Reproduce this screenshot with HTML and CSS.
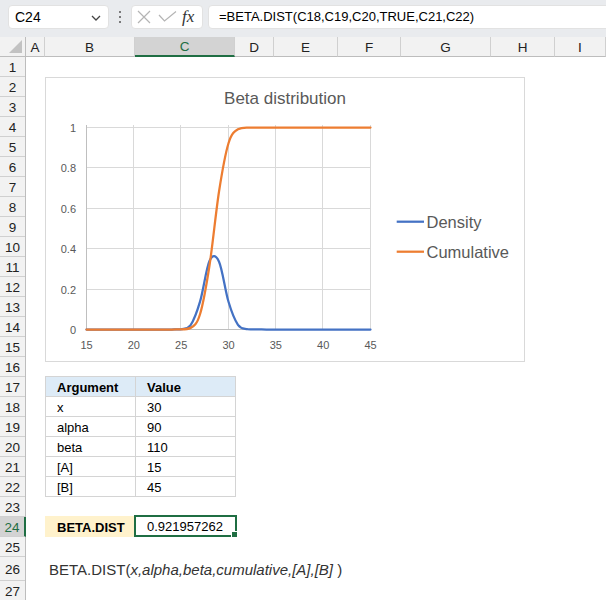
FILE: index.html
```html
<!DOCTYPE html>
<html lang="en">
<head>
<meta charset="utf-8">
<title>BETA.DIST</title>
<link rel="stylesheet" href="styles.css">
</head>
<body>
<div class="app">
  <div class="toolbar">
    <div class="namebox">
      <span class="ref">C24</span>
      <svg class="chev" width="10" height="6" viewBox="0 0 10 6"><path d="M1 1 L5 5 L9 1" fill="none" stroke="#444" stroke-width="1.3"/></svg>
    </div>
    <div class="dots"><span></span><span></span><span></span></div>
    <div class="fxbox">
      <svg class="ico-x" width="14" height="14" viewBox="0 0 14 14"><path d="M1 1 L13 13 M13 1 L1 13" stroke="#b4b4b4" stroke-width="1.2" fill="none"/></svg>
      <svg class="ico-ok" width="19" height="13" viewBox="0 0 19 13"><path d="M1 4 L6.5 10 L18 0.5" stroke="#b4b4b4" stroke-width="1.2" fill="none"/></svg>
      <span class="fx">fx</span>
    </div>
    <div class="formula">=BETA.DIST(C18,C19,C20,TRUE,C21,C22)</div>
  </div>

  <div class="colheads">
    <div class="corner"><span class="tri"></span></div>
    <div class="ch c-a">A</div>
    <div class="ch c-b">B</div>
    <div class="ch c-c sel">C</div>
    <div class="ch c-d">D</div>
    <div class="ch c-e">E</div>
    <div class="ch c-f">F</div>
    <div class="ch c-g">G</div>
    <div class="ch c-h">H</div>
    <div class="ch c-i">I</div>
  </div>

  <div class="body">
    <div class="rowheads">
      <div class="rh">1</div><div class="rh">2</div><div class="rh">3</div><div class="rh">4</div>
      <div class="rh">5</div><div class="rh">6</div><div class="rh">7</div><div class="rh">8</div>
      <div class="rh">9</div><div class="rh">10</div><div class="rh">11</div><div class="rh">12</div>
      <div class="rh">13</div><div class="rh">14</div><div class="rh">15</div><div class="rh">16</div>
      <div class="rh">17</div><div class="rh">18</div><div class="rh">19</div><div class="rh">20</div>
      <div class="rh">21</div><div class="rh">22</div><div class="rh">23</div><div class="rh sel">24</div>
      <div class="rh">25</div><div class="rh tall">26</div><div class="rh">27</div>
    </div>

    <div class="cells">
      <div class="tc colb r17 hdr">Argument</div>
      <div class="tc colc r17 hdr">Value</div>
      <div class="tc colb r18">x</div>
      <div class="tc colc r18">30</div>
      <div class="tc colb r19">alpha</div>
      <div class="tc colc r19">90</div>
      <div class="tc colb r20">beta</div>
      <div class="tc colc r20">110</div>
      <div class="tc colb r21">[A]</div>
      <div class="tc colc r21">15</div>
      <div class="tc colb r22 last">[B]</div>
      <div class="tc colc r22 last">45</div>

      <div class="tc colb r24 fn">BETA.DIST</div>
      <div class="active r24">0.921957262</div>

      <div class="syntax">BETA.DIST(<i>x,alpha,beta,cumulative,[A],[B]</i> )</div>

      <div class="chart">
        <svg width="480" height="285" viewBox="0 0 480 285">
          <rect x="0.5" y="0.5" width="479" height="284" fill="#fff" stroke="#d9d9d9"/>
          <text class="title" x="240" y="27" text-anchor="middle">Beta distribution</text>
          <g stroke="#d9d9d9" stroke-width="1">
            <path d="M41.5 50.5 H325.5 M41.5 90.5 H325.5 M41.5 131.5 H325.5 M41.5 171.5 H325.5 M41.5 212.5 H325.5"/>
            <path d="M88.5 48 V252.5 M135.5 48 V252.5 M183.5 48 V252.5 M230.5 48 V252.5 M277.5 48 V252.5 M325.5 48 V252.5"/>
            <path d="M41.5 48 V252.5 M41.5 252.5 H325.5" stroke="#bfbfbf"/>
          </g>
          <g class="ylab" text-anchor="end">
            <text x="31" y="54.5">1</text>
            <text x="31" y="94.5">0.8</text>
            <text x="31" y="135.5">0.6</text>
            <text x="31" y="175.5">0.4</text>
            <text x="31" y="216.5">0.2</text>
            <text x="31" y="256.5">0</text>
          </g>
          <g class="xlab" text-anchor="middle">
            <text x="41.5" y="272">15</text>
            <text x="88.8" y="272">20</text>
            <text x="136.2" y="272">25</text>
            <text x="183.5" y="272">30</text>
            <text x="230.8" y="272">35</text>
            <text x="278.2" y="272">40</text>
            <text x="325.5" y="272">45</text>
          </g>
          <path id="density" d="" fill="none" stroke="#4472c4" stroke-width="2.25" stroke-linejoin="round" stroke-linecap="round"/>
          <path id="cumulative" d="" fill="none" stroke="#ed7d31" stroke-width="2.25" stroke-linejoin="round" stroke-linecap="round"/>
          <path d="M351.7 144.7 H379" stroke="#4472c4" stroke-width="2.25"/>
          <path d="M351.7 174.7 H379" stroke="#ed7d31" stroke-width="2.25"/>
          <text class="leg" x="381.5" y="150.5">Density</text>
          <text class="leg" x="381.5" y="180.5">Cumulative</text>
        </svg>
      </div>
    </div>
  </div>
</div>
<script src="script.js"></script>
</body>
</html>
```

FILE: styles.css
```css
* { box-sizing: border-box; }
html, body { margin: 0; padding: 0; background: #fff; }
body {
  font-family: "Liberation Sans", Arial, sans-serif;
  color: #000;
  width: 606px;
  height: 600px;
  overflow: hidden;
}
.app { width: 606px; overflow: hidden; }

/* toolbar */
.toolbar {
  height: 37px;
  background: #e9ebee;
  display: flex;
  align-items: flex-start;
  padding: 5px 0 0 8px;
}
.namebox {
  width: 101px;
  height: 24px;
  background: #fff;
  border: 1px solid #e2e2e2;
  border-radius: 4px;
  display: flex;
  align-items: center;
  justify-content: space-between;
  padding: 0 7px 0 6px;
  font-size: 14px;
}
.chev { margin-top: 1px; }
.dots {
  width: 22px;
  height: 24px;
  display: flex;
  flex-direction: column;
  align-items: center;
  justify-content: center;
  gap: 2.5px;
}
.dots span { width: 2.5px; height: 2.5px; background: #555; border-radius: 50%; }
.fxbox {
  width: 72px;
  height: 24px;
  background: #fff;
  border: 1px solid #e2e2e2;
  border-radius: 4px;
  display: flex;
  align-items: center;
  padding-left: 5px;
}
.ico-x { margin-right: 7px; }
.ico-ok { margin-right: 5px; }
.fx {
  font-family: "Liberation Serif", serif;
  font-style: italic;
  font-size: 17px;
  color: #333;
  margin-top: -1px;
}
.formula {
  flex: 1;
  height: 24px;
  margin-left: 5px;
  margin-right: -8px;
  background: #fff;
  border: 1px solid #e2e2e2;
  border-radius: 4px;
  font-size: 13px;
  line-height: 22px;
  padding-left: 10px;
  color: #000;
}

/* column headers */
.colheads {
  display: flex;
  height: 20px;
  background: #f2f2f2;
  font-size: 13.5px;
  color: #222;
}
.corner {
  width: 26px;
  border-right: 1px solid #bdbdbd;
  border-bottom: 1px solid #bdbdbd;
  position: relative;
}
.tri {
  position: absolute;
  right: 3px;
  bottom: 3px;
  width: 0;
  height: 0;
  border-left: 13px solid transparent;
  border-bottom: 13px solid #c2c2c2;
}
.ch {
  border-right: 1px solid #d0d0d0;
  border-bottom: 1px solid #bdbdbd;
  display: flex;
  align-items: center;
  justify-content: center;
  padding-top: 1px;
}
.ch.sel {
  background: #d3d3d3;
  color: #1f6e43;
  border-bottom: 2px solid #1f6e43;
}
.c-a { width: 19px; }
.c-b { width: 90px; }
.c-c { width: 100px; }
.c-d { width: 39px; }
.c-e { width: 64px; }
.c-f { width: 63px; }
.c-g { width: 90px; }
.c-h { width: 64px; }
.c-i { flex: 1; }

/* body */
.body { display: flex; }
.rowheads {
  width: 26px;
  background: #f2f2f2;
  border-right: 1px solid #bdbdbd;
  font-size: 13.5px;
  color: #222;
}
.rh {
  height: 20px;
  border-bottom: 1px solid #d0d0d0;
  display: flex;
  align-items: center;
  justify-content: center;
  padding-top: 1px;
}
.rh.tall { height: 24px; }
.rh.sel {
  background: #d3d3d3;
  color: #1f6e43;
  margin-right: -1px;
  border-right: 2px solid #1f6e43;
}

.cells {
  flex: 1;
  position: relative;
  display: grid;
  grid-template-columns: 19px 90px 100px 39px 64px 63px 90px 64px 1fr;
  grid-template-rows: repeat(25, 20px) 24px 20px;
  font-size: 13px;
}
.colb { grid-column: 2; }
.colc { grid-column: 3; }
.r17 { grid-row: 17; }
.r18 { grid-row: 18; }
.r19 { grid-row: 19; }
.r20 { grid-row: 20; }
.r21 { grid-row: 21; }
.r22 { grid-row: 22; }
.r24 { grid-row: 24; }

.tc {
  border-left: 1px solid #d4d4d4;
  border-top: 1px solid #d4d4d4;
  margin-top: -1px;
  display: flex;
  align-items: center;
  padding-left: 11px;
  padding-top: 1px;
}
.tc.colc { border-right: 1px solid #d4d4d4; margin-right: -1px; }
.tc.last { border-bottom: 1px solid #d4d4d4; }
.tc.hdr { background: #ddebf7; font-weight: bold; }
.tc.fn {
  background: #fff2cc;
  font-weight: bold;
  border: none;
  margin-top: -1px;
  padding-left: 12px;
}

.active {
  grid-column: 3;
  border: 2px solid #1f6e43;
  margin: -2px -2px 0 -1px;
  display: flex;
  align-items: center;
  padding-left: 11px;
  padding-top: 1px;
  position: relative;
}
.active::after {
  content: "";
  position: absolute;
  right: -3px;
  bottom: -3px;
  width: 5px;
  height: 5px;
  background: #1f6e43;
  border: 1px solid #fff;
}

.syntax {
  grid-column: 2 / 8;
  grid-row: 26;
  font-size: 15px;
  color: #333;
  display: flex;
  align-items: center;
  padding-left: 4px;
  white-space: pre;
}
.syntax i { font-style: italic; }

.chart {
  position: absolute;
  left: 19px;
  top: 20px;
  width: 480px;
  height: 285px;
}
.chart svg { display: block; }
.title { font-family: "Liberation Sans", Arial, sans-serif; font-size: 17px; fill: #595959; }
.ylab text, .xlab text { font-family: "Liberation Sans", Arial, sans-serif; font-size: 11px; fill: #595959; }
.leg { font-family: "Liberation Sans", Arial, sans-serif; font-size: 16.5px; fill: #595959; }
```

FILE: script.js
```js
(function () {
  function lgamma(z) {
    var c = [0.99999999999980993, 676.5203681218851, -1259.1392167224028,
      771.32342877765313, -176.61502916214059, 12.507343278686905,
      -0.13857109526572012, 9.9843695780195716e-6, 1.5056327351493116e-7];
    z -= 1;
    var x = c[0];
    for (var i = 1; i < 9; i++) x += c[i] / (z + i);
    var t = z + 7.5;
    return 0.5 * Math.log(2 * Math.PI) + (z + 0.5) * Math.log(t) - t + Math.log(x);
  }
  var a = 90, b = 110, A = 15, B = 45, W = B - A;
  var lnB = lgamma(a) + lgamma(b) - lgamma(a + b);
  function pdf(x) {
    var u = (x - A) / W;
    if (u <= 0 || u >= 1) return 0;
    return Math.exp((a - 1) * Math.log(u) + (b - 1) * Math.log(1 - u) - lnB) / W;
  }
  function cdf(x) {
    if (x <= A) return 0;
    var n = 4000, h = (x - A) / n, s = pdf(A) + pdf(x);
    for (var i = 1; i < n; i++) s += (i % 2 ? 4 : 2) * pdf(A + i * h);
    return Math.min(1, s * h / 3);
  }
  var BASE = 252.5;
  function px(x) { return 41.5 + (x - 15) * 284 / 30; }
  function py(v) { return BASE - v * 202; }
  function f(n) { return n.toFixed(2); }

  /* Catmull-Rom style smoothing (Excel "smoothed line"), kept above the axis */
  function smooth(pts) {
    var d = "M" + f(pts[0][0]) + " " + f(pts[0][1]);
    for (var i = 0; i < pts.length - 1; i++) {
      var p0 = pts[i - 1] || pts[i], p1 = pts[i], p2 = pts[i + 1], p3 = pts[i + 2] || p2;
      var c1y = Math.min(BASE, p1[1] + (p2[1] - p0[1]) / 6);
      var c2y = Math.min(BASE, p2[1] - (p3[1] - p1[1]) / 6);
      d += " C" + f(p1[0] + (p2[0] - p0[0]) / 6) + " " + f(c1y) + " " +
        f(p2[0] - (p3[0] - p1[0]) / 6) + " " + f(c2y) + " " +
        f(p2[0]) + " " + f(p2[1]);
    }
    return d;
  }

  /* monotone cubic (no overshoot) */
  function monotone(pts) {
    var n = pts.length, dx = [], dy = [], m = [], t = [];
    for (var i = 0; i < n - 1; i++) {
      dx[i] = pts[i + 1][0] - pts[i][0];
      dy[i] = pts[i + 1][1] - pts[i][1];
      m[i] = dy[i] / dx[i];
    }
    t[0] = m[0];
    t[n - 1] = m[n - 2];
    for (i = 1; i < n - 1; i++) {
      if (m[i - 1] * m[i] <= 0) t[i] = 0;
      else t[i] = (m[i - 1] + m[i]) / 2;
    }
    for (i = 0; i < n - 1; i++) {
      if (m[i] === 0) { t[i] = 0; t[i + 1] = 0; continue; }
      var al = t[i] / m[i], be = t[i + 1] / m[i], s = al * al + be * be;
      if (s > 9) {
        var k = 3 / Math.sqrt(s);
        t[i] = k * al * m[i];
        t[i + 1] = k * be * m[i];
      }
    }
    var d = "M" + f(pts[0][0]) + " " + f(pts[0][1]);
    for (i = 0; i < n - 1; i++) {
      var h = dx[i] / 3;
      d += " C" + f(pts[i][0] + h) + " " + f(pts[i][1] + t[i] * h) + " " +
        f(pts[i + 1][0] - h) + " " + f(pts[i + 1][1] - t[i + 1] * h) + " " +
        f(pts[i + 1][0]) + " " + f(pts[i + 1][1]);
    }
    return d;
  }

  var dp = [], cp = [];
  for (var x = 15; x <= 45; x++) {
    dp.push([px(x), py(pdf(x))]);
    cp.push([px(x), py(cdf(x))]);
  }
  document.getElementById("density").setAttribute("d", smooth(dp));
  document.getElementById("cumulative").setAttribute("d", monotone(cp));
})();
```
